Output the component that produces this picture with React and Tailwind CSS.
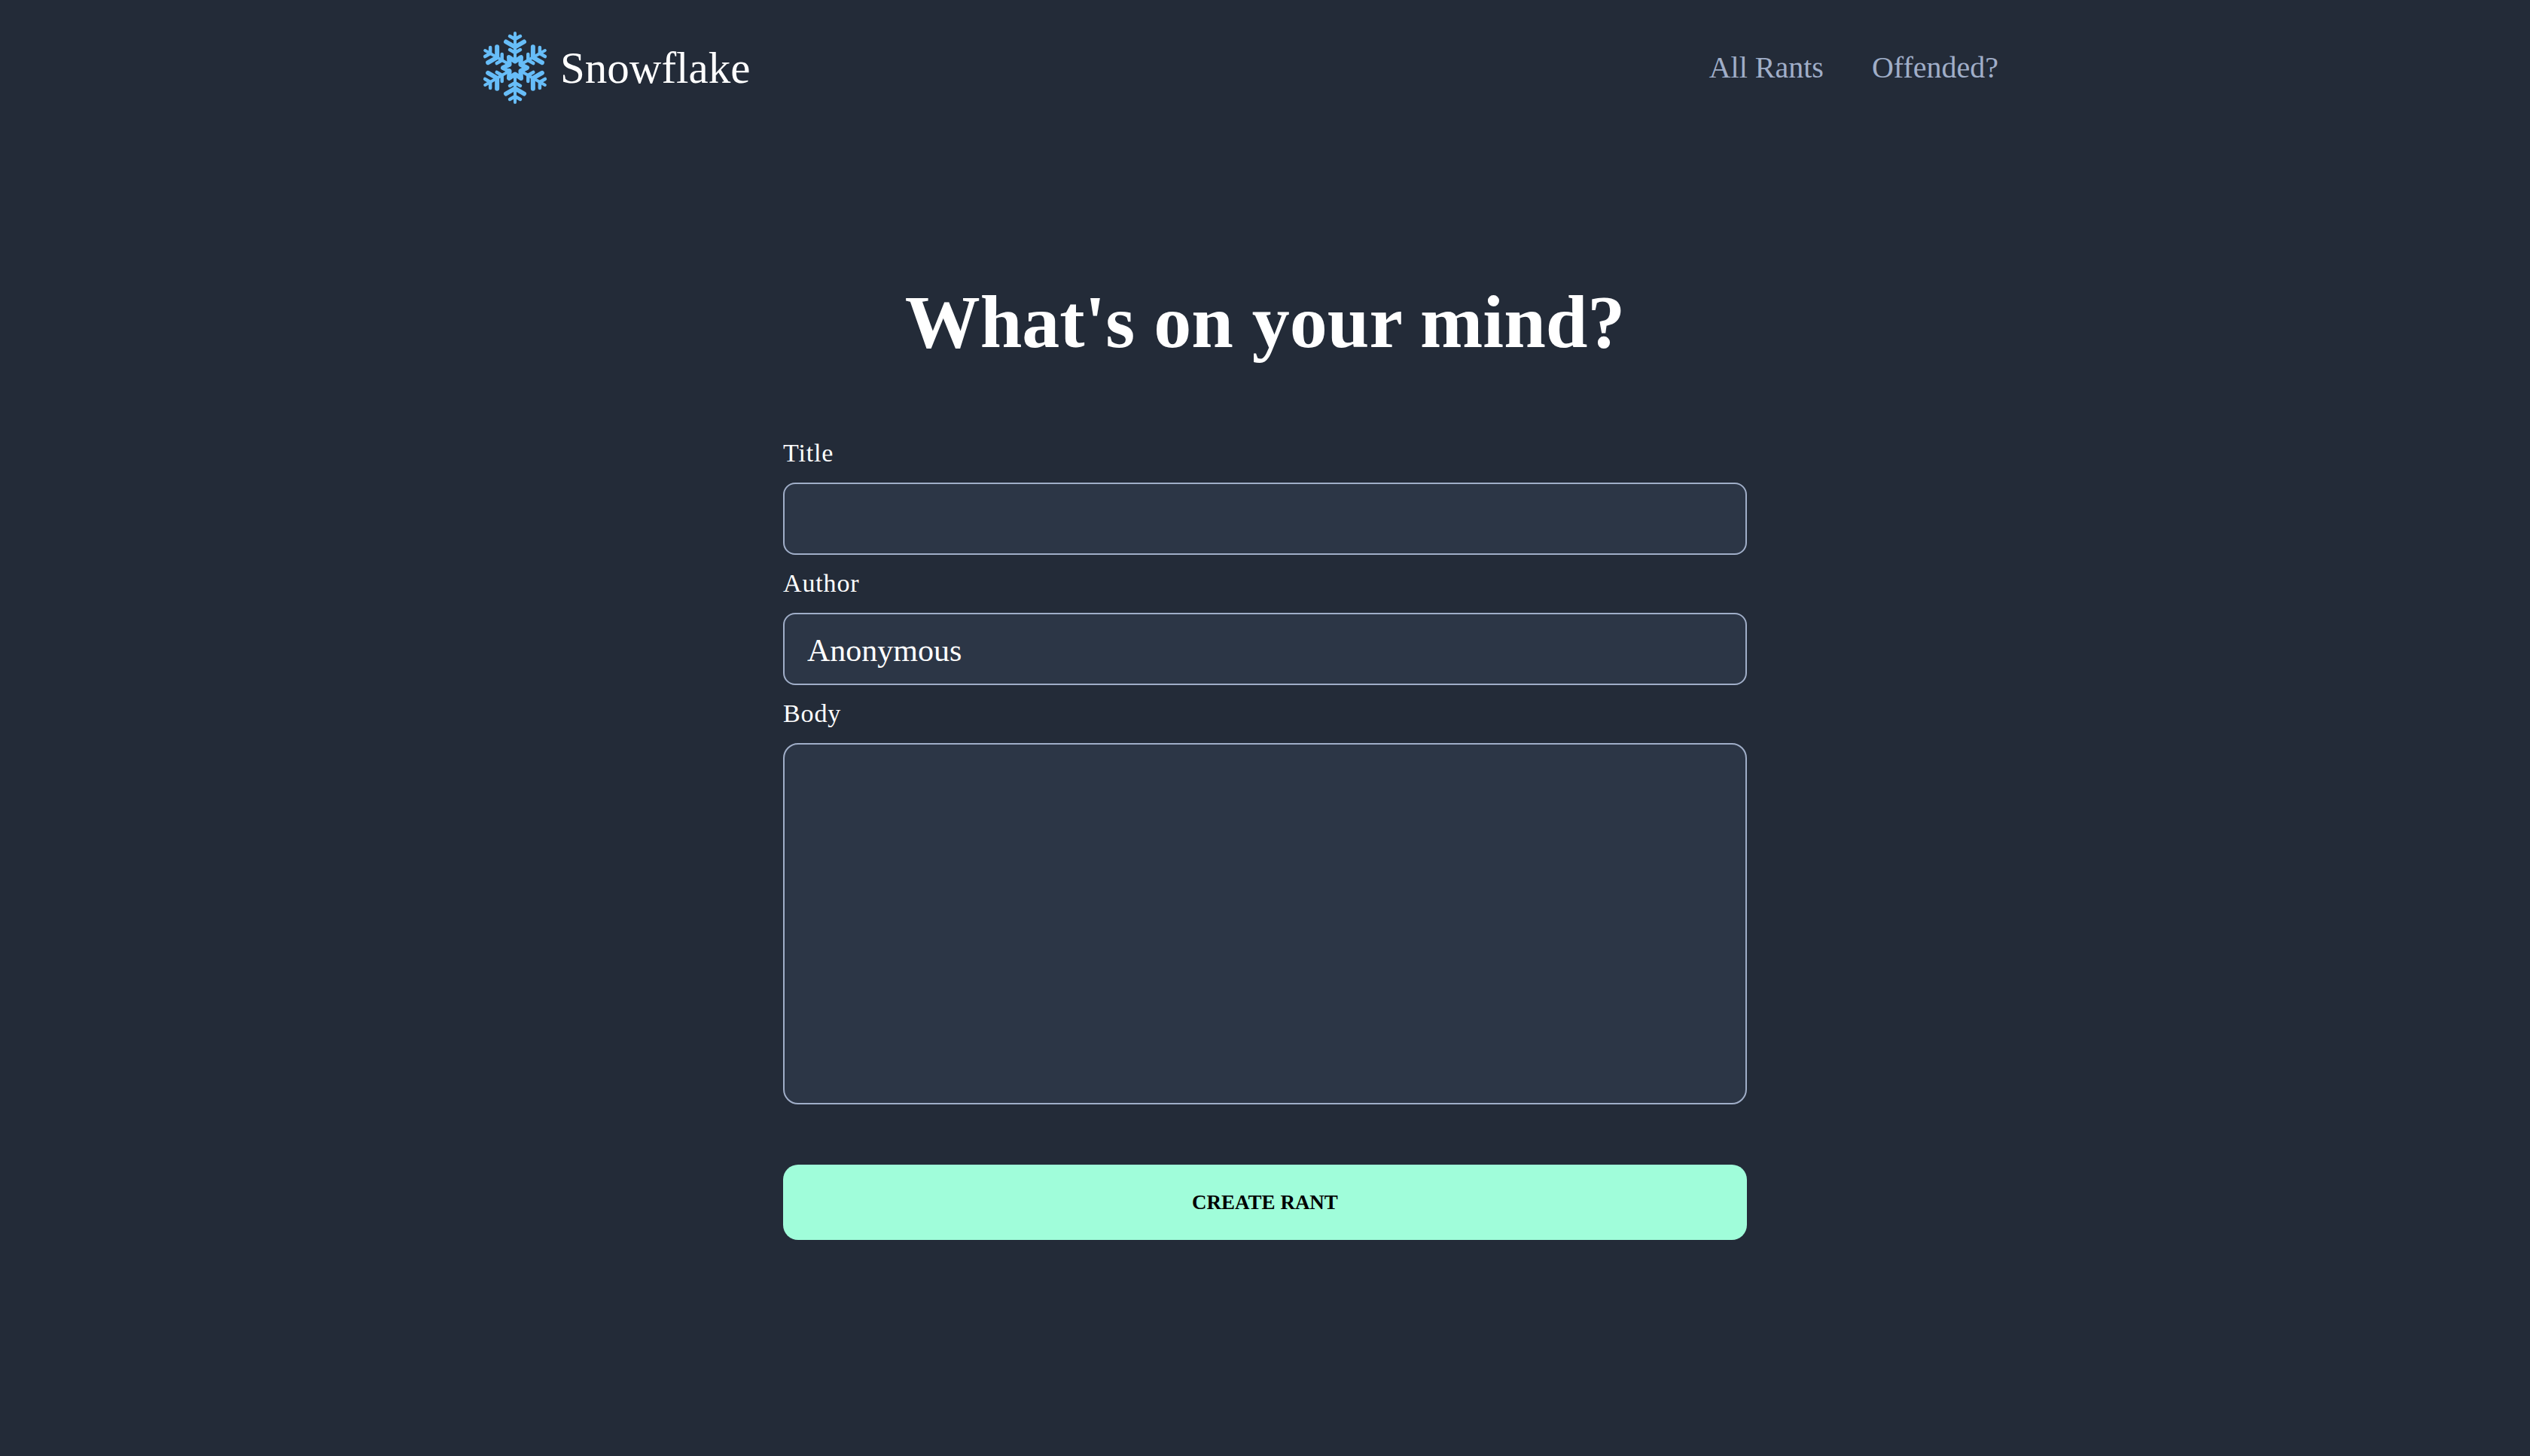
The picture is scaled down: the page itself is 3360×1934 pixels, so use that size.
import React from "react";

const ARMS = [0, 60, 120, 180, 240, 300];

function SnowflakeIcon() {
  return (
    <svg viewBox="-44 -48 88 96" className="h-24 w-[88px]" fill="none" stroke="#67bdf8" strokeLinecap="round" strokeLinejoin="round" aria-hidden="true">
      {ARMS.map((angle) => (
        <g key={angle} transform={`rotate(${angle})`}>
          <path d="M0 -46V-12" strokeWidth="4" />
          <path d="M-7 -42L0 -38L7 -42" strokeWidth="4.5" />
          <path d="M-12 -34.5L0 -27.5L12 -34.5" strokeWidth="6" />
          <path d="M-7 -24L0 -20L7 -24" strokeWidth="4.5" />
        </g>
      ))}
      <path
        d="M16 0L7.4 4.3L8 13.9L0 8.5L-8 13.9L-7.4 4.3L-16 0L-7.4 -4.3L-8 -13.9L0 -8.5L8 -13.9L7.4 -4.3Z"
        strokeWidth="6"
      />
    </svg>
  );
}

function Field({ id, label, children }) {
  return (
    <div className="flex flex-col">
      <label htmlFor={id} className="mb-[19px] text-[34px] leading-10 tracking-wide">
        {label}
      </label>
      {children}
    </div>
  );
}

export default function App() {
  return (
    <div className="min-h-screen bg-[#232b38] font-['Baskerville','Liberation_Serif',serif] text-white">
      <header className="mx-auto flex h-[180px] max-w-[2080px] items-center justify-between">
        <a href="#home" className="flex items-center gap-4">
          <SnowflakeIcon />
          <span className="text-[59px] leading-[72px]">Snowflake</span>
        </a>
        <nav className="flex gap-16 pr-[66px] text-[40px] leading-[48px] text-[#a0aec8]">
          <a href="#rants">All Rants</a>
          <a href="#offended">Offended?</a>
        </nav>
      </header>

      <main className="mx-auto max-w-[1280px] pt-[188px]">
        <h1 className="text-center text-[100px] font-bold leading-[120px]">What's on your mind?</h1>
        <form className="mt-[94px] flex flex-col gap-[18px]" onSubmit={(e) => e.preventDefault()}>
          <Field id="title" label="Title">
            <input id="title" type="text" className="h-24 rounded-2xl border-2 border-[#a0aec8] bg-[#2c3646] px-[30px] text-[42px] outline-none" />
          </Field>
          <Field id="author" label="Author">
            <input id="author" type="text" defaultValue="Anonymous" className="h-24 rounded-2xl border-2 border-[#a0aec8] bg-[#2c3646] px-[30px] pt-1 text-[42px] outline-none" />
          </Field>
          <Field id="body" label="Body">
            <textarea id="body" className="h-[480px] resize-none rounded-[20px] border-2 border-[#a0aec8] bg-[#2c3646] px-[30px] py-5 text-[42px] outline-none" />
          </Field>
          <button type="submit" className="mt-[62px] h-[100px] rounded-[20px] bg-[#a0fdda] text-[27px] font-bold text-black">
            CREATE RANT
          </button>
        </form>
      </main>
    </div>
  );
}
